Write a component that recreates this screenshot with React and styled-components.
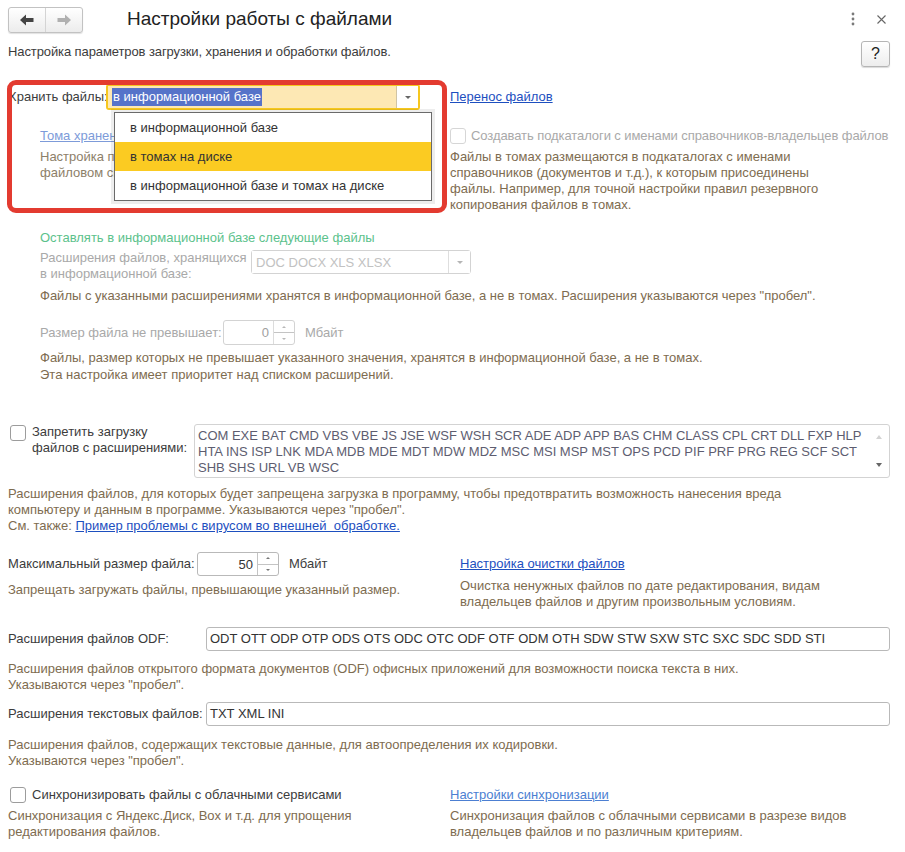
import React from 'react'
import styled, { createGlobalStyle } from 'styled-components'

const GlobalStyle = createGlobalStyle`
  body {
    margin: 0;
    background: #fff;
    font-family: "Liberation Sans", Arial, sans-serif;
    font-size: 13px;
    color: #404040;
  }
`

const Page = styled.div`
  position: relative;
  width: 905px;
  box-sizing: border-box;
  padding: 0 15px 20px 8px;
`

const Header = styled.div`
  display: flex;
  align-items: center;
  height: 38px;
`

const NavGroup = styled.div`
  display: flex;
  width: 75px;
  height: 26px;
  box-sizing: border-box;
  border: 1px solid #c2c2c2;
  border-radius: 3px;
  background: linear-gradient(#ffffff, #ececec);
  box-shadow: 0 1px 1px rgba(0, 0, 0, 0.12);
  margin-top: 1px;
`

const NavButton = styled.div`
  flex: 1;
  display: flex;
  align-items: center;
  justify-content: center;
  & + & {
    border-left: 1px solid #d4d4d4;
  }
`

const Title = styled.div`
  margin-left: 44px;
  font-size: 19px;
  color: #222;
`

const HeaderTools = styled.div`
  margin-left: auto;
  display: flex;
  align-items: center;
  gap: 22px;
  padding-right: 4px;
  color: #777;
`

const SubRow = styled.div`
  display: flex;
  justify-content: space-between;
  align-items: flex-start;
  height: 26px;
  margin-top: 3px;
`

const SubTitle = styled.div`
  padding-top: 3px;
  line-height: 16px;
  color: #3c3c3c;
  letter-spacing: -0.1px;
`

const HelpButton = styled.div`
  width: 29px;
  height: 26px;
  box-sizing: border-box;
  border: 1px solid #b5b5b5;
  border-radius: 3px;
  background: linear-gradient(#ffffff, #ededed);
  box-shadow: 0 1px 1px rgba(0, 0, 0, 0.15);
  display: flex;
  align-items: center;
  justify-content: center;
  font-size: 16px;
  color: #222;
`

const Row = styled.div`
  display: flex;
  align-items: ${p => p.$align || 'flex-start'};
  margin-top: ${p => p.$mt || 0}px;
  padding-left: ${p => p.$indent || 0}px;
`

const Column = styled.div`
  width: ${p => (p.$w ? `${p.$w}px` : 'auto')};
  flex: ${p => (p.$w ? 'none' : '1')};
  display: flex;
  flex-direction: column;
`

const Label = styled.div`
  width: ${p => (p.$w ? `${p.$w}px` : 'auto')};
  flex: none;
  line-height: 16px;
  color: ${p => (p.$disabled ? '#a9a9a9' : '#3c3c3c')};
  white-space: nowrap;
`

const Hint = styled.div`
  margin-top: ${p => p.$mt || 0}px;
  line-height: 16px;
  color: #7e6c50;
  white-space: nowrap;
`

const Link = styled.a`
  color: ${p => (p.$light ? '#4c7fd2' : '#1d4fbf')};
  text-decoration: underline;
  line-height: 16px;
  white-space: nowrap;
  cursor: pointer;
`

const GroupTitle = styled.div`
  line-height: 16px;
  color: #5cc28c;
`

const Checkbox = styled.div`
  width: 16px;
  height: 16px;
  box-sizing: border-box;
  border: 1px solid ${p => (p.$disabled ? '#d6d6d6' : '#9c9c9c')};
  border-radius: 3px;
  background: #fff;
  flex: none;
  margin-left: ${p => p.$ml || 0}px;
  margin-right: ${p => p.$mr || 6}px;
`

const Combo = styled.div`
  position: relative;
  display: flex;
  box-sizing: border-box;
  width: ${p => p.$w}px;
  height: ${p => p.$h || 24}px;
  border: ${p => (p.$focused ? '2px solid #f6c71f' : '1px solid #d3d3d3')};
  border-radius: 3px;
  background: #fff;
  flex: none;
`

const ComboValue = styled.div`
  flex: 1;
  display: flex;
  align-items: center;
  padding-left: 4px;
  background: ${p => (p.$focused ? '#fde8b4' : '#fff')};
  color: ${p => (p.$disabled ? '#c2c2c2' : '#333')};
  font-size: 13px;
  white-space: nowrap;
`

const Selected = styled.span`
  background: #5673c9;
  color: #fff;
  padding: 1px 1px 2px;
`

const ComboButton = styled.div`
  width: 21px;
  display: flex;
  align-items: center;
  justify-content: center;
  border-left: 1px solid ${p => (p.$focused ? '#d0c4a4' : '#dedede')};
  background: #fff;
  &::after {
    content: '';
    border-left: 3px solid transparent;
    border-right: 3px solid transparent;
    border-top: 3px solid ${p => (p.$disabled ? '#b5b5b5' : '#666')};
  }
`

const DropList = styled.div`
  position: absolute;
  top: 26px;
  left: 6px;
  width: 318px;
  box-sizing: border-box;
  border: 1px solid #6a6a6a;
  background: #fff;
  box-shadow: 0 0 0 3px rgba(0, 0, 0, 0.07);
  z-index: 2;
`

const DropItem = styled.div`
  height: 29px;
  line-height: 29px;
  padding-left: 15px;
  color: #333;
  background: ${p => (p.$active ? '#fbcb22' : '#fff')};
  white-space: nowrap;
`

const Field = styled.div`
  box-sizing: border-box;
  width: ${p => (p.$w ? `${p.$w}px` : 'auto')};
  flex: ${p => (p.$w ? 'none' : '1')};
  height: ${p => p.$h || 24}px;
  border: 1px solid #b9b9b9;
  border-radius: 3px;
  padding-left: 3px;
  line-height: 22px;
  color: #333;
  white-space: nowrap;
  overflow: hidden;
`

const NumberField = styled.div`
  display: flex;
  box-sizing: border-box;
  width: ${p => p.$w}px;
  height: ${p => p.$h || 24}px;
  border: 1px solid ${p => (p.$disabled ? '#d3d3d3' : '#b9b9b9')};
  border-radius: 3px;
  flex: none;
`

const NumberValue = styled.div`
  flex: 1;
  text-align: right;
  padding-right: 4px;
  display: flex;
  align-items: center;
  justify-content: flex-end;
  color: ${p => (p.$disabled ? '#a0a0a0' : '#333')};
`

const Spinner = styled.div`
  width: 20px;
  display: flex;
  flex-direction: column;
  border-left: 1px solid ${p => (p.$disabled ? '#dcdcdc' : '#c4c4c4')};
`

const SpinHalf = styled.div`
  flex: 1;
  display: flex;
  align-items: center;
  justify-content: center;
  & + & {
    border-top: 1px solid ${p => (p.$disabled ? '#dcdcdc' : '#c4c4c4')};
  }
  &::after {
    content: '';
    border-left: 2px solid transparent;
    border-right: 2px solid transparent;
    ${p => (p.$up ? 'border-bottom' : 'border-top')}: 2px solid ${p => (p.$disabled ? '#b8b8b8' : '#777')};
  }
`

const Unit = styled.div`
  margin-left: 10px;
  line-height: 16px;
  color: ${p => (p.$disabled ? '#a9a9a9' : '#3c3c3c')};
`

const TextArea = styled.div`
  position: relative;
  flex: 1;
  height: 54px;
  box-sizing: border-box;
  border: 1px solid #d3d3d3;
  border-radius: 3px;
  padding: 3px 20px 0 3px;
  line-height: 16px;
  color: #5d5d70;
  font-size: 13px;
  white-space: nowrap;
`

const ScrollArrow = styled.div`
  position: absolute;
  right: 7px;
  ${p => (p.$up ? 'top: 10px;' : 'bottom: 10px;')}
  border-left: 3px solid transparent;
  border-right: 3px solid transparent;
  ${p => (p.$up ? 'border-bottom: 4px solid #d2d2d2;' : 'border-top: 4px solid #666;')}
`

const Annotation = styled.div`
  position: absolute;
  left: 7px;
  top: 80px;
  width: 440px;
  height: 133px;
  box-sizing: border-box;
  border: 5px solid #e33b30;
  border-radius: 9px;
  pointer-events: none;
  z-index: 3;
`

const ArrowLeft = ({ color }) => (
  <svg width="14" height="12" viewBox="0 0 14 12">
    <path d="M0 6 L6 0.5 L6 4 L13.5 4 L13.5 8 L6 8 L6 11.5 Z" fill={color} />
  </svg>
)

const ArrowRight = ({ color }) => (
  <svg width="14" height="12" viewBox="0 0 14 12">
    <path d="M14 6 L8 0.5 L8 4 L0.5 4 L0.5 8 L8 8 L8 11.5 Z" fill={color} />
  </svg>
)

const MoreIcon = () => (
  <svg width="4" height="14" viewBox="0 0 4 14">
    <circle cx="2" cy="2" r="1.4" fill="#7a7a7a" />
    <circle cx="2" cy="7" r="1.4" fill="#7a7a7a" />
    <circle cx="2" cy="12" r="1.4" fill="#7a7a7a" />
  </svg>
)

const CloseIcon = () => (
  <svg width="9" height="9" viewBox="0 0 9 9">
    <path d="M0.5 0.5 L8.5 8.5 M8.5 0.5 L0.5 8.5" stroke="#666" strokeWidth="1.1" />
  </svg>
)

export default function App() {
  return (
    <Page>
      <GlobalStyle />
      <Header>
        <NavGroup>
          <NavButton><ArrowLeft color="#444" /></NavButton>
          <NavButton><ArrowRight color="#b0b0b0" /></NavButton>
        </NavGroup>
        <Title>Настройки работы с файлами</Title>
        <HeaderTools>
          <MoreIcon />
          <CloseIcon />
        </HeaderTools>
      </Header>

      <SubRow>
        <SubTitle>Настройка параметров загрузки, хранения и обработки файлов.</SubTitle>
        <HelpButton>?</HelpButton>
      </SubRow>

      <Row $align="center" $mt={17}>
        <Label $w={98}>Хранить файлы:</Label>
        <Combo $w={314} $h={26} $focused>
          <ComboValue $focused><Selected>в информационной базе</Selected></ComboValue>
          <ComboButton $focused />
          <DropList>
            <DropItem>в информационной базе</DropItem>
            <DropItem $active>в томах на диске</DropItem>
            <DropItem>в информационной базе и томах на диске</DropItem>
          </DropList>
        </Combo>
        <Link style={{ marginLeft: 30 }}>Перенос файлов</Link>
      </Row>

      <Row $mt={18}>
        <Column $w={442}>
          <Row $indent={32}>
            <Column>
              <Link $light style={{ color: '#7d9bd9' }}>Тома хранения файлов</Link>
              <Hint $mt={5} style={{ color: '#8d8069' }}>
                Настройка путей к каталогам для хранения<br />
                файловом системе.
              </Hint>
            </Column>
          </Row>
        </Column>
        <Column>
          <Row $align="center">
            <Checkbox $disabled $mr={5} />
            <Label $disabled style={{ letterSpacing: '-0.08px' }}>Создавать подкаталоги с именами справочников-владельцев файлов</Label>
          </Row>
          <Hint $mt={5}>
            Файлы в томах размещаются в подкаталогах с именами<br />
            справочников (документов и т.д.), к которым присоединены<br />
            файлы. Например, для точной настройки правил резервного<br />
            копирования файлов в томах.
          </Hint>
        </Column>
      </Row>

      <Row $indent={32} $mt={17}>
        <Column>
          <GroupTitle>Оставлять в информационной базе следующие файлы</GroupTitle>
          <Row $mt={4}>
            <Label $w={211} $disabled>
              Расширения файлов, хранящихся<br />в информационной базе:
            </Label>
            <Combo $w={220}>
              <ComboValue $disabled>DOC DOCX XLS XLSX</ComboValue>
              <ComboButton $disabled />
            </Combo>
          </Row>
          <Hint $mt={6}>
            Файлы с указанными расширениями хранятся в информационной базе, а не в томах. Расширения указываются через "пробел".
          </Hint>
          <Row $align="center" $mt={16}>
            <Label $w={183} $disabled>Размер файла не превышает:</Label>
            <NumberField $w={72} $h={25} $disabled>
              <NumberValue $disabled>0</NumberValue>
              <Spinner $disabled>
                <SpinHalf $up $disabled />
                <SpinHalf $disabled />
              </Spinner>
            </NumberField>
            <Unit $disabled>Мбайт</Unit>
          </Row>
          <Hint $mt={5} style={{ lineHeight: '16.5px' }}>
            Файлы, размер которых не превышает указанного значения, хранятся в информационной базе, а не в томах.<br />
            Эта настройка имеет приоритет над списком расширений.
          </Hint>
        </Column>
      </Row>

      <Row $mt={41}>
        <Checkbox $ml={2} $mr={6} style={{ marginTop: 1 }} />
        <Label $w={162}>
          Запретить загрузку<br />
          файлов с расширениями:
        </Label>
        <TextArea>
          <div>COM EXE BAT CMD VBS VBE JS JSE WSF WSH SCR ADE ADP APP BAS CHM CLASS CPL CRT DLL FXP HLP</div>
          <div>HTA INS ISP LNK MDA MDB MDE MDT MDW MDZ MSC MSI MSP MST OPS PCD PIF PRF PRG REG SCF SCT</div>
          <div>SHB SHS URL VB WSC</div>
          <ScrollArrow $up />
          <ScrollArrow />
        </TextArea>
      </Row>
      <Hint $mt={8}>
        Расширения файлов, для которых будет запрещена загрузка в программу, чтобы предотвратить возможность нанесения вреда<br />
        компьютеру и данным в программе. Указываются через "пробел".<br />
        См. также: <Link>Пример проблемы с вирусом во внешней&nbsp; обработке.</Link>
      </Hint>

      <Row $mt={18}>
        <Column $w={452}>
          <Row $align="center">
            <Label $w={189}>Максимальный размер файла:</Label>
            <NumberField $w={82}>
              <NumberValue>50</NumberValue>
              <Spinner>
                <SpinHalf $up />
                <SpinHalf />
              </Spinner>
            </NumberField>
            <Unit>Мбайт</Unit>
          </Row>
          <Hint $mt={6}>Запрещать загружать файлы, превышающие указанный размер.</Hint>
        </Column>
        <Column style={{ paddingTop: 4 }}>
          <Link>Настройка очистки файлов</Link>
          <Hint $mt={6}>
            Очистка ненужных файлов по дате редактирования, видам<br />
            владельцев файлов и другим произвольным условиям.
          </Hint>
        </Column>
      </Row>

      <Row $align="center" $mt={17}>
        <Label $w={198}>Расширения файлов ODF:</Label>
        <Field>ODT OTT ODP OTP ODS OTS ODC OTC ODF OTF ODM OTH SDW STW SXW STC SXC SDC SDD STI</Field>
      </Row>
      <Hint $mt={10}>
        Расширения файлов открытого формата документов (ODF) офисных приложений для возможности поиска текста в них.<br />
        Указываются через "пробел".
      </Hint>

      <Row $align="center" $mt={9}>
        <Label $w={198}>Расширения текстовых файлов:</Label>
        <Field>TXT XML INI</Field>
      </Row>
      <Hint $mt={11}>
        Расширения файлов, содержащих текстовые данные, для автоопределения их кодировки.<br />
        Указываются через "пробел".
      </Hint>

      <Row $mt={18}>
        <Column $w={442}>
          <Row $align="center">
            <Checkbox $ml={2} $mr={6} />
            <Label>Синхронизировать файлы с облачными сервисами</Label>
          </Row>
          <Hint $mt={5}>
            Синхронизация с Яндекс.Диск, Box и т.д. для упрощения<br />
            редактирования файлов.
          </Hint>
        </Column>
        <Column>
          <Link $light>Настройки синхронизации</Link>
          <Hint $mt={5}>
            Синхронизация файлов с облачными сервисами в разрезе видов<br />
            владельцев файлов и по различным критериям.
          </Hint>
        </Column>
      </Row>

      <Annotation />
    </Page>
  )
}
